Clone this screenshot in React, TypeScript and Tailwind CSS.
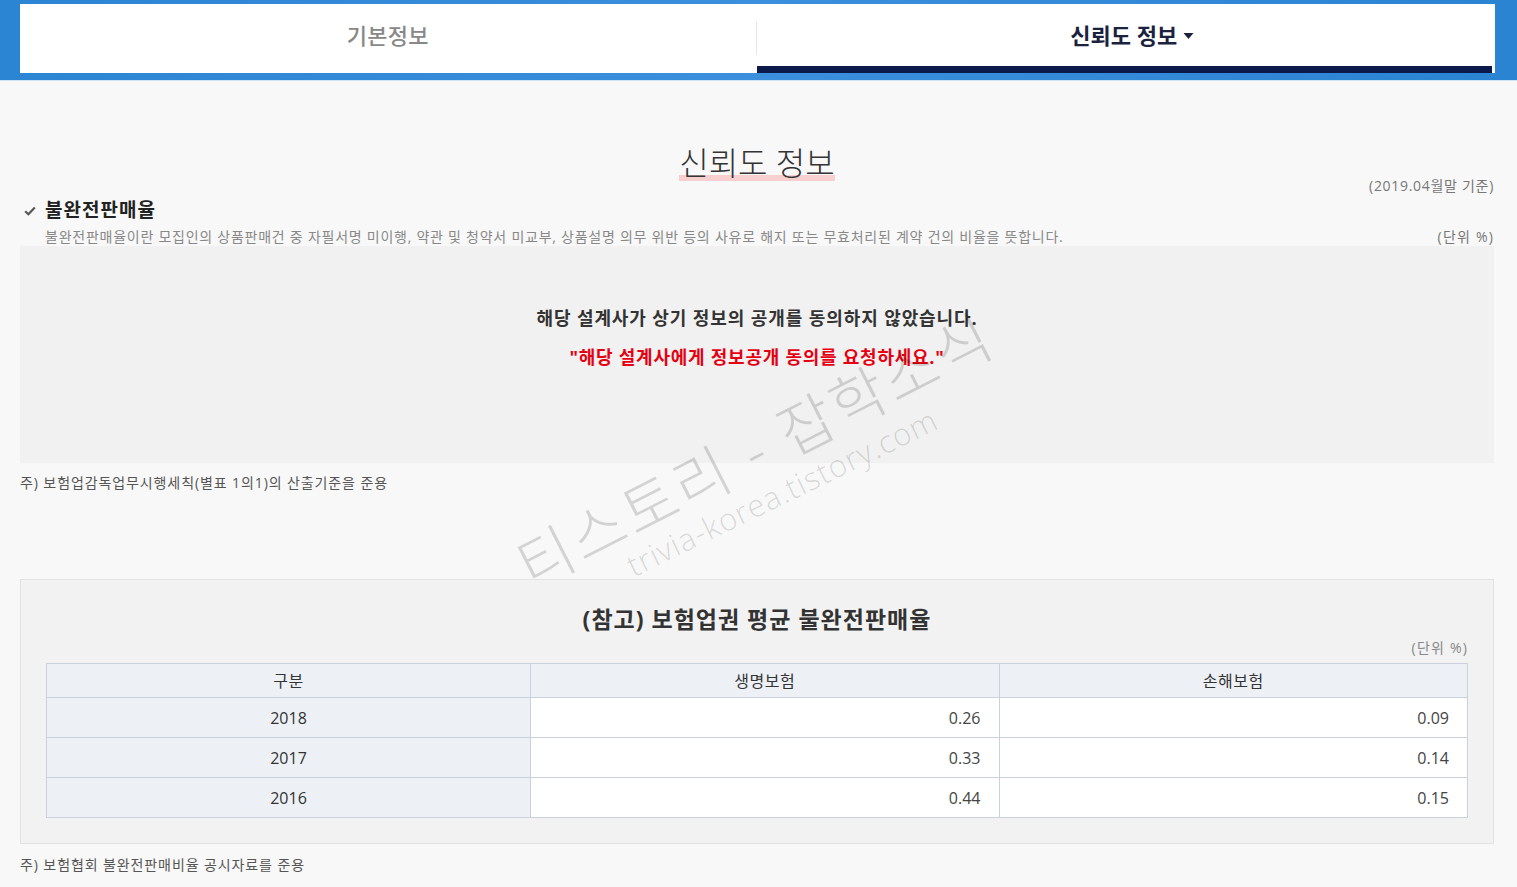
import React from "react";

const rows = [
  { year: "2018", life: "0.26", nonlife: "0.09" },
  { year: "2017", life: "0.33", nonlife: "0.14" },
  { year: "2016", life: "0.44", nonlife: "0.15" },
];

export default function App() {
  return (
    <div
      className="relative min-h-[887px] w-full overflow-hidden bg-[#f8f8f8] text-[#333]"
      style={{ fontFamily: '"Open Sans", "Noto Sans CJK KR", sans-serif' }}
    >
      {/* Header tabs */}
      <div className="h-[81px] bg-gradient-to-r from-[#2b85d3] via-[#3b8fdc] to-[#2a84d2] pl-[20px] pr-[22px] pt-[4px] border-b border-[#cfe2f3]">
        <div className="flex h-[69px] bg-white">
          <div className="flex flex-1 items-center justify-center pb-[7px] text-[22px] font-medium tracking-[0.3px] text-[#888]">
            기본정보
          </div>
          <div className="my-[18px] w-px bg-[#e6e6e6]" />
          <div className="mr-[3px] flex flex-1 flex-col">
            <div className="flex flex-1 items-center justify-center gap-[6px] pl-[16px] text-[22px] font-bold text-[#1a2240]">
              <span>신뢰도 정보</span>
              <svg width="11" height="8" viewBox="0 0 11 8" className="mt-[1px]">
                <path d="M0.5 1 L10.5 1 L5.5 7 Z" fill="#1a2240" />
              </svg>
            </div>
            <div className="h-[7px] bg-[#0c1a4b]" />
          </div>
        </div>
      </div>

      {/* Main */}
      <div className="pl-[20px] pr-[23px] pt-[64px]">
        <div className="text-center">
          <span className="inline-block h-[36px] text-[32px] font-light leading-[36px] text-[#333] shadow-[inset_0_-6px_0_#f8cfcf]">
            신뢰도 정보
          </span>
        </div>
        <div className="mt-[-5px] h-[20px] text-right text-[14px] leading-[20px] tracking-[0.7px] text-[#777]">
          (2019.04월말 기준)
        </div>
        <div className="mt-[2px] flex h-[24px] items-center">
          <svg width="12" height="10" viewBox="0 0 12 10" className="ml-[4px] mr-[9px] mt-[2px]">
            <path d="M1.2 5.2 L4.4 8.2 L10.8 1.6" stroke="#555" strokeWidth="2.2" fill="none" />
          </svg>
          <span className="text-[19px] font-bold tracking-[1px] text-[#222]">불완전판매율</span>
        </div>
        <div className="mt-[6px] flex h-[18px] items-center justify-between pl-[25px] text-[14px] leading-[18px] text-[#888]">
          <span className="tracking-[0.75px]">
            불완전판매율이란 모집인의 상품판매건 중 자필서명 미이행, 약관 및 청약서 미교부, 상품설명 의무 위반 등의 사유로 해지 또는 무효처리된 계약 건의 비율을 뜻합니다.
          </span>
          <span className="tracking-[1.2px] text-[#777]">(단위 %)</span>
        </div>

        <div className="flex h-[217px] flex-col items-center bg-[#f1f1f1] pt-[60px]">
          <div className="h-[24px] text-[18px] font-bold leading-[24px] tracking-[0.9px] text-[#333]">
            해당 설계사가 상기 정보의 공개를 동의하지 않았습니다.
          </div>
          <div className="mt-[15px] h-[24px] text-[18px] font-bold leading-[24px] tracking-[0.75px] text-[#e50012]">
            "해당 설계사에게 정보공개 동의를 요청하세요."
          </div>
        </div>

        <div className="mt-[10px] h-[20px] text-[14px] leading-[20px] tracking-[0.9px] text-[#555]">
          주) 보험업감독업무시행세칙(별표 1의1)의 산출기준을 준용
        </div>

        <div className="mt-[86px] border border-[#e3e3e3] bg-[#f2f2f2] px-[25px] pb-[25px] pt-[24px]">
          <div className="h-[30px] text-center text-[23px] font-bold leading-[30px] tracking-[1px] text-[#333]">
            (참고) 보험업권 평균 불완전판매율
          </div>
          <div className="mt-[5px] h-[18px] text-right text-[14px] leading-[18px] tracking-[1.2px] text-[#888]">
            (단위 %)
          </div>
          <table className="mt-[6px] w-full border-collapse text-[16px] text-[#333]">
            <colgroup>
              <col className="w-[484px]" />
              <col />
              <col />
            </colgroup>
            <thead>
              <tr className="h-[34px] bg-[#edf1f6]">
                <th className="border border-[#c9d1dc] font-normal tracking-[0.5px]">구분</th>
                <th className="border border-[#c9d1dc] font-normal tracking-[0.5px]">생명보험</th>
                <th className="border border-[#c9d1dc] font-normal tracking-[0.5px]">손해보험</th>
              </tr>
            </thead>
            <tbody>
              {rows.map((r) => (
                <tr key={r.year} className="h-[40px]">
                  <td className="border border-[#c9d1dc] bg-[#edf1f6] text-center">{r.year}</td>
                  <td className="border border-[#c9d1dc] bg-white pr-[18px] text-right text-[#444]">{r.life}</td>
                  <td className="border border-[#c9d1dc] bg-white pr-[18px] text-right text-[#444]">{r.nonlife}</td>
                </tr>
              ))}
            </tbody>
          </table>
        </div>

        <div className="mt-[11px] h-[20px] text-[14px] leading-[20px] tracking-[0.9px] text-[#555]">
          주) 보험협회 불완전판매비율 공시자료를 준용
        </div>
      </div>

      {/* Watermark */}
      <div className="pointer-events-none absolute left-[755px] top-[450px] -translate-x-1/2 -translate-y-1/2 -rotate-[27deg] whitespace-nowrap text-[60px] font-light tracking-[3px] text-black/15">
        티스토리 - 잡학소식
      </div>
      <div className="pointer-events-none absolute left-[782px] top-[492px] -translate-x-1/2 -translate-y-1/2 -rotate-[26deg] whitespace-nowrap text-[31px] font-light tracking-[1px] text-black/15">
        trivia-korea.tistory.com
      </div>
    </div>
  );
}
